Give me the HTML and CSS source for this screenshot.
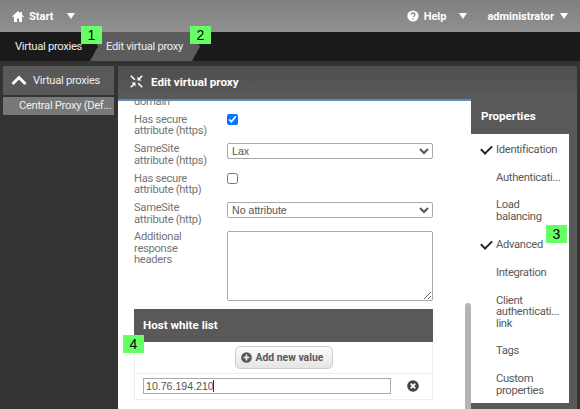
FILE: index.html

```html
<!DOCTYPE html>
<html>
  <head>
    <title>Edit virtual proxy</title>
    <link rel="stylesheet" href="styles.css">
  </head>
  <body>
    <div class="app">
      <div class="topbar">
        <div class="top-item start">
          <svg class="icon" width="12" height="11" viewBox="0 0 12 11"><path d="M6 0 0 5.500l.7.8L2 5.200V11h3V7.500h2V11h3V5.200l1.300 1.100.7-.8L10 3.700V1H8.500v1.300z" fill="#fff"/></svg>
          <span>Start</span>
          <span class="caret caret-start"></span>
        </div>
        <div class="top-item help">
          <svg class="icon" width="12" height="12" viewBox="0 0 12 12"><circle cx="6" cy="6" r="5.600" fill="#fff"/><path d="M4.200 4.600C4.300 3.500 5 3 6 3s1.900.6 1.900 1.600c0 1.300-1.400 1.300-1.400 2.500" fill="none" stroke="#888" stroke-width="1.300"/><rect x="5.400" y="8" width="1.300" height="1.300" fill="#888"/></svg>
          <span>Help</span>
          <span class="caret caret-help"></span>
        </div>
        <div class="top-item user">
          <span>administrator</span>
          <span class="caret caret-user"></span>
        </div>
      </div>

      <div class="crumbs">
        <span class="crumb">Virtual proxies</span>
        <span class="crumb crumb-active">Edit virtual proxy</span>
      </div>

      <div class="workspace">
        <div class="sidebar">
          <div class="side-head">
            <svg width="16" height="11" viewBox="0 0 16 11"><path d="M1.500 9 8 2.500 14.500 9" fill="none" stroke="#fff" stroke-width="3"/></svg>
            <span>Virtual proxies</span>
          </div>
          <div class="side-item">Central Proxy (Def...</div>
        </div>

        <div class="panel">
          <div class="panel-head">
            <svg width="13" height="13" viewBox="0 0 13 13"><g fill="none" stroke="#fff" stroke-width="1.600"><path d="M.8.8l4 4M8.200 8.200l4 4"/><path d="M12.200.8 8.500 4.500M4.500 8.500.8 12.200"/></g><path d="M7.500 1.500v4h4zM1.500 7.500h4v4z" fill="#fff"/></svg>
            <span>Edit virtual proxy</span>
          </div>
          <div class="panel-body">
            <div class="content">
              <div class="form">
                <div class="row"><label class="field-label">domain</label></div>
                <div class="row">
                  <label class="field-label">Has secure attribute (https)</label>
                  <div class="field"><input type="checkbox" class="check" checked></div>
                </div>
                <div class="row">
                  <label class="field-label">SameSite attribute (https)</label>
                  <div class="field"><select class="select"><option>Lax</option></select></div>
                </div>
                <div class="row">
                  <label class="field-label">Has secure attribute (http)</label>
                  <div class="field"><input type="checkbox" class="check"></div>
                </div>
                <div class="row">
                  <label class="field-label">SameSite attribute (http)</label>
                  <div class="field"><select class="select"><option>No attribute</option></select></div>
                </div>
                <div class="row">
                  <label class="field-label">Additional response headers</label>
                  <div class="field"><textarea class="textarea"></textarea></div>
                </div>

                <div class="list">
                  <div class="list-head">Host white list</div>
                  <div class="list-add">
                    <button class="add-btn" type="button">
                      <svg width="11" height="11" viewBox="0 0 12 12"><circle cx="6" cy="6" r="5.800" fill="#555"/><path d="M6 2.800v6.400M2.800 6h6.400" stroke="#eee" stroke-width="1.800"/></svg>
                      <span>Add new value</span>
                    </button>
                  </div>
                  <div class="list-row">
                    <div class="host-wrap">
                      <input class="host-input" type="text" value="10.76.194.210">
                      <span class="text-caret"></span>
                    </div>
                    <svg class="remove" width="12" height="12" viewBox="0 0 12 12"><circle cx="6" cy="6" r="5.800" fill="#444"/><path d="M3.700 3.700l4.600 4.600M8.300 3.700 3.700 8.300" stroke="#fff" stroke-width="1.800"/></svg>
                  </div>
                </div>
              </div>
              <div class="scroll-thumb"></div>
            </div>

            <div class="props">
              <div class="props-head">Properties</div>
              <ul class="props-list">
                <li class="prop done">Identification</li>
                <li class="prop">Authenticati...</li>
                <li class="prop">Load<br>balancing</li>
                <li class="prop done">Advanced</li>
                <li class="prop">Integration</li>
                <li class="prop">Client<br>authenticati...<br>link</li>
                <li class="prop">Tags</li>
                <li class="prop">Custom<br>properties</li>
              </ul>
            </div>
          </div>
        </div>
      </div>

      <span class="badge badge-1">1</span>
      <span class="badge badge-2">2</span>
      <span class="badge badge-3">3</span>
      <span class="badge badge-4">4</span>
    </div>
  </body>
</html>
```

FILE: styles.css

```css
* {
  box-sizing: border-box;
}

html,
body {
  margin: 0;
  height: 100%;
  overflow: hidden;
}

body {
  font-family: Roboto, "Liberation Sans", sans-serif;
  font-size: 11.2px;
  letter-spacing: -0.3px;
  color: #595959;
}

.app {
  position: relative;
  display: flex;
  flex-direction: column;
  width: 580px;
  height: 409px;
  overflow: hidden;
  background-color: #333;
}

.topbar {
  display: flex;
  align-items: center;
  height: 32px;
  padding-left: 12px;
  background: linear-gradient(#808080, #909090);
  color: #fff;
  font-weight: 700;
  font-size: 11px;
  letter-spacing: 0;
}

.top-item {
  display: flex;
  align-items: center;
}

.top-item .icon {
  margin-right: 5px;
}

.help {
  margin-left: auto;
}

.user {
  margin-left: 20px;
  margin-right: 12px;
}

.caret {
  width: 0;
  height: 0;
  border-left: 4px solid transparent;
  border-right: 4px solid transparent;
  border-top: 6px solid #fff;
}

.caret-start {
  margin-left: 14px;
}

.caret-help {
  margin-left: 13px;
}

.caret-user {
  margin-left: 6px;
}

.crumbs {
  display: flex;
  align-items: center;
  height: 29px;
  background-color: #1a1a1a;
  color: #eee;
}

.crumb {
  padding-left: 15px;
  width: 90px;
  white-space: nowrap;
}

.crumb-active {
  display: flex;
  align-items: center;
  width: 110px;
  height: 29px;
  padding-left: 16px;
  background-color: #5c5c5c;
  clip-path: polygon(0 100%, 8px 50%, 0 0, 102px 0, 110px 50%, 102px 100%);
}

.workspace {
  flex: 1;
  display: flex;
  gap: 4px;
  min-height: 0;
  padding: 5px 3px 0;
}

.sidebar {
  width: 111px;
  color: #eee;
}

.side-head {
  display: flex;
  align-items: center;
  gap: 6px;
  height: 29px;
  padding-left: 8px;
  background-color: #595959;
}

.side-item {
  height: 18px;
  margin-top: 2px;
  padding-left: 16px;
  line-height: 17px;
  background-color: #787878;
  white-space: nowrap;
}

.panel {
  flex: 1;
  display: flex;
  flex-direction: column;
  min-width: 0;
  background-color: #595959;
}

.panel-head {
  display: flex;
  align-items: center;
  gap: 8px;
  height: 33px;
  padding-left: 12px;
  padding-bottom: 2px;
  color: #fff;
  font-size: 11.6px;
  font-weight: 700;
  letter-spacing: 0;
  background: linear-gradient(#4e4e4e, #5a5a5a);
}

.panel-body {
  flex: 1;
  display: flex;
  min-height: 0;
}

.content {
  position: relative;
  width: 353px;
  overflow: hidden;
  border-top: 2px solid #5b8cc0;
  background-color: #fff;
}

.form {
  display: flex;
  flex-direction: column;
  gap: 6.4px;
  width: 315px;
  margin-top: -5px;
  margin-left: 16px;
}

.row {
  display: flex;
  align-items: flex-start;
}

.field-label {
  width: 93px;
  padding-right: 14px;
  line-height: 11.5px;
  color: #757575;
}

.field {
  width: 206px;
}

.check {
  display: block;
  width: 11px;
  height: 11px;
  margin: 0;
}

.select {
  display: block;
  width: 100%;
  height: 16px;
  padding: 0;
  font-family: "Liberation Sans", sans-serif;
  font-size: 10.6px;
  color: #555;
  background-color: #fff;
  border: 1px solid #aaa;
  border-radius: 2px;
}

.textarea {
  display: block;
  width: 100%;
  height: 70px;
  margin: 0;
  border: 1px solid #aaa;
  border-radius: 2px;
}

.list {
  width: 299px;
  margin-top: 1px;
  border: 1px solid #eee;
  border-top: 0;
}

.list-head {
  height: 33px;
  margin: 0 -1px;
  padding-left: 9px;
  line-height: 33px;
  font-size: 11.6px;
  font-weight: 700;
  letter-spacing: 0;
  color: #fff;
  background-color: #595959;
}

.list-add {
  display: flex;
  justify-content: center;
  padding: 4px 0;
  border-bottom: 1px solid #eee;
}

.add-btn {
  display: flex;
  align-items: center;
  gap: 4px;
  width: 98px;
  height: 23px;
  padding: 0 0 0 5px;
  font-family: Roboto, "Liberation Sans", sans-serif;
  font-size: 10.4px;
  font-weight: 700;
  color: #595959;
  border: 1px solid #ccc;
  border-radius: 5px;
  background: linear-gradient(#fcfcfc, #e4e4e4);
}

.list-row {
  display: flex;
  align-items: center;
  height: 25px;
  padding-left: 8px;
}

.host-wrap {
  position: relative;
  width: 248px;
}

.host-input {
  display: block;
  width: 248px;
  height: 16px;
  padding: 0 2px;
  font-family: "Liberation Sans", sans-serif;
  font-size: 10.6px;
  color: #555;
  border: 1px solid #aaa;
  outline: none;
}

.text-caret {
  position: absolute;
  left: 70px;
  top: 2px;
  width: 1px;
  height: 12px;
  background-color: #333;
}

.remove {
  margin-left: 16px;
}

.scroll-thumb {
  position: absolute;
  right: 0;
  top: 202px;
  width: 6px;
  height: 120px;
  border-radius: 3px 3px 0 0;
  background-color: #b4b4b4;
}

.props {
  flex: 1;
  display: flex;
  flex-direction: column;
  min-width: 0;
}

.props-head {
  height: 35px;
  padding-left: 10px;
  line-height: 35px;
  font-size: 11.6px;
  font-weight: 700;
  letter-spacing: 0;
  color: #fff;
}

.props-list {
  width: 98px;
  height: 269px;
  margin: 0;
  padding: 1.5px 0 0;
  list-style: none;
  background-color: #fff;
}

.prop {
  position: relative;
  padding: 8.2px 0 8.2px 25px;
  line-height: 11.5px;
  color: #595959;
  white-space: nowrap;
}

.done::before {
  content: "";
  position: absolute;
  left: 9.5px;
  top: 9px;
  width: 9px;
  height: 5px;
  border-left: 2px solid #222;
  border-bottom: 2px solid #222;
  transform: rotate(-45deg);
}

.badge {
  position: absolute;
  width: 21px;
  height: 18px;
  line-height: 18px;
  text-align: center;
  font-family: "Liberation Sans", sans-serif;
  font-size: 14px;
  letter-spacing: 0;
  color: #000;
  background-color: #66ff66;
}

.badge-1 {
  left: 81px;
  top: 26px;
}

.badge-2 {
  left: 190px;
  top: 26px;
}

.badge-3 {
  left: 546px;
  top: 225px;
}

.badge-4 {
  left: 123px;
  top: 335px;
}
```
